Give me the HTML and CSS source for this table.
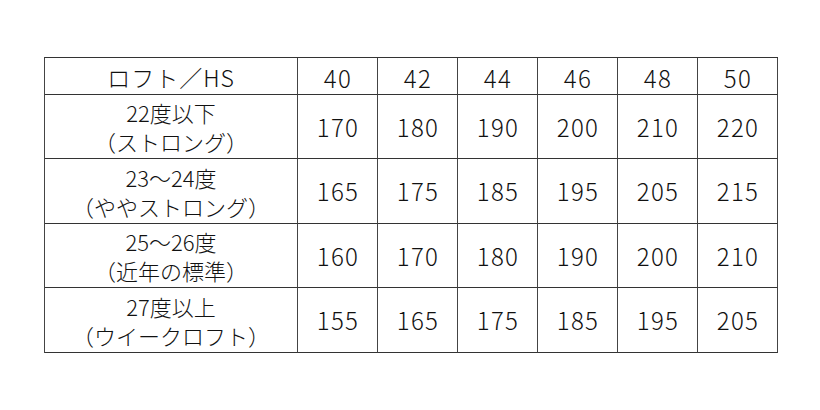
FILE: index.html
```html
<!DOCTYPE html>
<html lang="ja">
<head>
<meta charset="utf-8">
<title>ロフト／HS</title>
<link rel="stylesheet" href="styles.css">
</head>
<body>
<div class="page">
  <div class="grid">
    <div class="cell head label">ロフト／HS</div>
    <div class="cell head num">40</div>
    <div class="cell head num">42</div>
    <div class="cell head num">44</div>
    <div class="cell head num">46</div>
    <div class="cell head num">48</div>
    <div class="cell head num">50</div>

    <div class="cell label r-a"><span class="ln">22度以下</span><span class="ln">（ストロング）</span></div>
    <div class="cell num r-a">170</div>
    <div class="cell num r-a">180</div>
    <div class="cell num r-a">190</div>
    <div class="cell num r-a">200</div>
    <div class="cell num r-a">210</div>
    <div class="cell num r-a">220</div>

    <div class="cell label r-b"><span class="ln">23〜24度</span><span class="ln">（ややストロング）</span></div>
    <div class="cell num r-b">165</div>
    <div class="cell num r-b">175</div>
    <div class="cell num r-b">185</div>
    <div class="cell num r-b">195</div>
    <div class="cell num r-b">205</div>
    <div class="cell num r-b">215</div>

    <div class="cell label r-a"><span class="ln">25〜26度</span><span class="ln">（近年の標準）</span></div>
    <div class="cell num r-a">160</div>
    <div class="cell num r-a">170</div>
    <div class="cell num r-a">180</div>
    <div class="cell num r-a">190</div>
    <div class="cell num r-a">200</div>
    <div class="cell num r-a">210</div>

    <div class="cell label r-b"><span class="ln">27度以上</span><span class="ln">（ウイークロフト）</span></div>
    <div class="cell num r-b">155</div>
    <div class="cell num r-b">165</div>
    <div class="cell num r-b">175</div>
    <div class="cell num r-b">185</div>
    <div class="cell num r-b">195</div>
    <div class="cell num r-b">205</div>
  </div>
</div>
</body>
</html>
```

FILE: styles.css
```css
html, body {
  margin: 0;
  padding: 0;
  background: #ffffff;
}

body {
  font-family: "Noto Sans CJK JP", "Noto Sans", sans-serif;
  font-weight: 300;
  color: #111111;
}

.page {
  padding: 57px 0 0 44px;
}

.grid {
  display: grid;
  grid-template-columns: 253px repeat(6, 80px);
  grid-template-rows: 37px 64px 65px 64px 65px;
  width: max-content;
  border-top: 1px solid #333;
  border-left: 1px solid #444;
}

.cell {
  box-sizing: border-box;
  border-right: 1px solid #444;
  border-bottom: 1px solid #333;
  display: flex;
  flex-direction: column;
  align-items: center;
  justify-content: center;
  text-align: center;
}

.num {
  font-size: 24px;
  line-height: 1;
  letter-spacing: 1.3px;
  padding-left: 1px;
}

.head.num {
  padding-top: 4px;
}

.label {
  font-size: 22px;
  line-height: 1;
  gap: 7px;
}

.ln {
  display: block;
}

.head.label {
  padding-top: 3px;
  font-size: 23px;
  letter-spacing: 1px;
}
```
